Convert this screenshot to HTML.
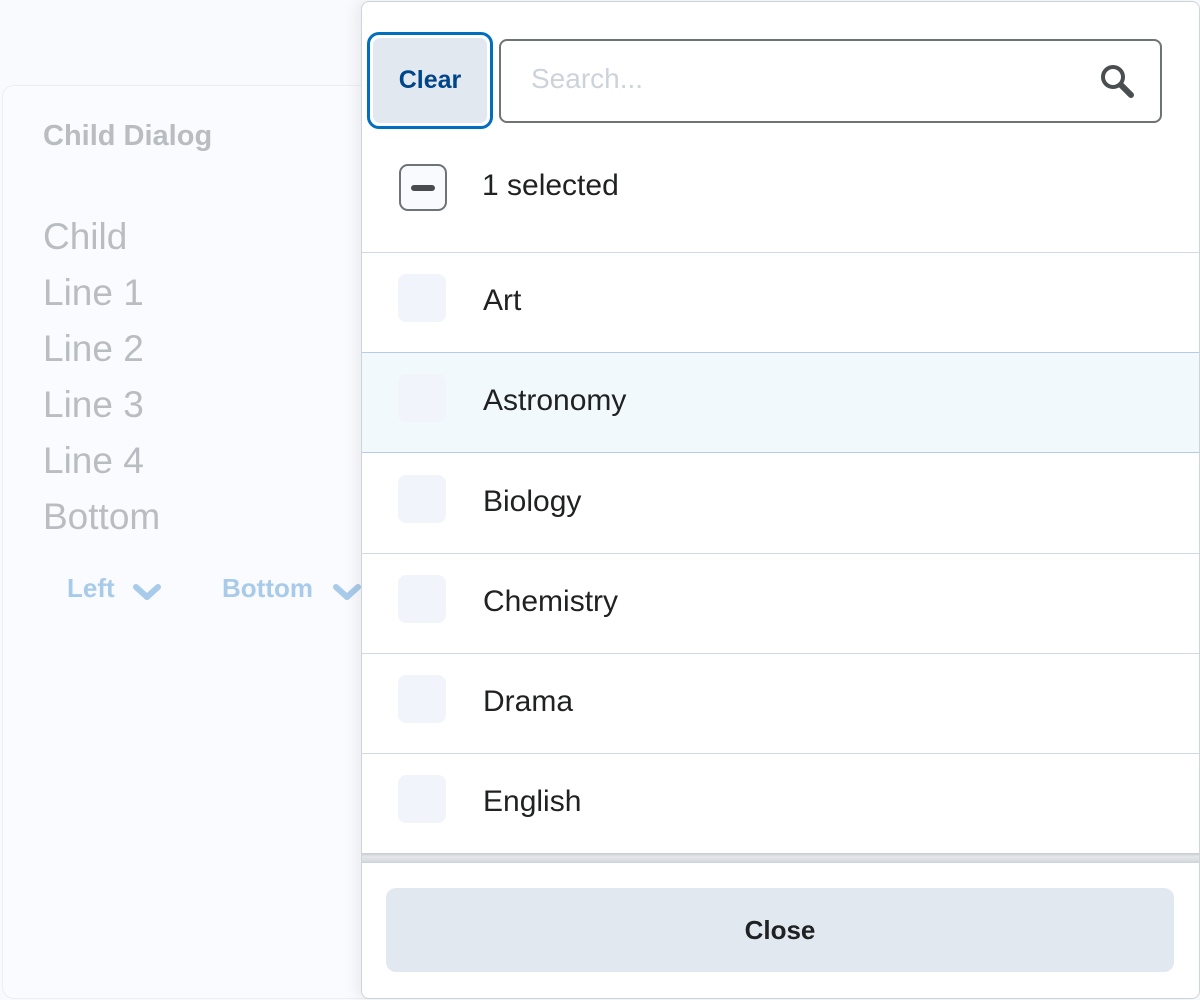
<!DOCTYPE html>
<html><head><style>
*{box-sizing:border-box;margin:0;padding:0}
body{width:1200px;height:1000px;background:#f9fafd;font-family:"Liberation Sans",sans-serif;position:relative;overflow:hidden}
.card{position:absolute;left:2px;top:85px;width:420px;height:914px;background:#fafbfe;border:1px solid #eceef2;border-radius:12px}
.t{position:absolute;left:43px;color:#b9bcc1}
.panel{position:absolute;left:361px;top:1px;width:839px;height:998px;background:#fff;border:1px solid #cdd5dc;border-radius:8px;box-shadow:-6px 0 14px rgba(0,0,0,.06)}
.clear{position:absolute;left:5px;top:30px;width:126px;height:97px;border:3px solid #006fbf;border-radius:12px;padding:3px}
.clear div{width:100%;height:100%;background:#e1e8f0;border-radius:7px;color:#004489;font-weight:bold;font-size:25px;display:flex;align-items:center;justify-content:center}
.search{position:absolute;left:137px;top:37px;width:663px;height:84px;border:2px solid #6e7376;border-radius:8px;font-size:28px;color:#cdd3da;padding:22px 30px}
.row{position:absolute;left:0;width:837px;height:101px;border-top:1px solid #d3d9e3;font-size:30px;color:#202122}
.row .cb{position:absolute;left:36px;top:21px;width:48px;height:48px;border-radius:8px;background:#f1f4fa}
.row span{position:absolute;left:121px;top:31px}
</style></head><body>
<div class="card"></div>
<div class="t" style="top:120px;font-weight:bold;font-size:29px">Child Dialog</div>
<div class="t" style="top:209px;font-size:37px;line-height:56px">Child<br>Line 1<br>Line 2<br>Line 3<br>Line 4<br>Bottom</div>
<div style="position:absolute;left:67px;top:573px;color:#a8cbe9;font-weight:bold;font-size:26px">Left</div>
<svg style="position:absolute;left:132px;top:582px" width="30" height="20"><path d="M4 5 L15 15 L26 5" stroke="#a8cbe9" stroke-width="6" fill="none" stroke-linecap="round" stroke-linejoin="round"/></svg>
<div style="position:absolute;left:222px;top:573px;color:#a8cbe9;font-weight:bold;font-size:26px">Bottom</div>
<svg style="position:absolute;left:332px;top:582px" width="30" height="20"><path d="M4 5 L15 15 L26 5" stroke="#a8cbe9" stroke-width="6" fill="none" stroke-linecap="round" stroke-linejoin="round"/></svg>
<div class="panel">
<div class="clear"><div>Clear</div></div>
<div class="search">Search...</div>
<svg style="position:absolute;left:737px;top:60px" width="40" height="40"><circle cx="14" cy="15" r="10" stroke="#4a4e51" stroke-width="4" fill="none"/><path d="M22 23 L32 33" stroke="#4a4e51" stroke-width="6" stroke-linecap="round"/></svg>
<div style="position:absolute;left:37px;top:162px;width:48px;height:47px;border:2px solid #6e7376;border-radius:9px;background:#f9fafd"><div style="position:absolute;left:10px;top:19px;width:24px;height:6px;border-radius:3px;background:#494c4f"></div></div>
<div style="position:absolute;left:120px;top:167px;font-size:30px;color:#202122">1 selected</div>
<div class="row" style="top:250px"><div class="cb"></div><span>Art</span></div>
<div class="row" style="top:350px;background:#f2f9fd;border-top-color:#b6cbe8;border-bottom:1px solid #b6cbe8;height:101px"><div class="cb"></div><span>Astronomy</span></div>
<div class="row" style="top:451px;border-top:none"><div class="cb" style="top:22px"></div><span style="top:32px">Biology</span></div>
<div class="row" style="top:551px"><div class="cb"></div><span>Chemistry</span></div>
<div class="row" style="top:651px"><div class="cb"></div><span>Drama</span></div>
<div class="row" style="top:751px"><div class="cb"></div><span>English</span></div>
<div style="position:absolute;left:0;top:851px;width:837px;height:10px;background:linear-gradient(#c5cad0,#e4e6e9 40%,#d5d9de);border-bottom:1px solid #cdd5dc"></div>
<div style="position:absolute;left:24px;top:886px;width:788px;height:84px;background:#e1e8f0;border-radius:10px;font-weight:bold;font-size:26px;color:#202122;display:flex;align-items:center;justify-content:center">Close</div>
</div>
</body></html>
